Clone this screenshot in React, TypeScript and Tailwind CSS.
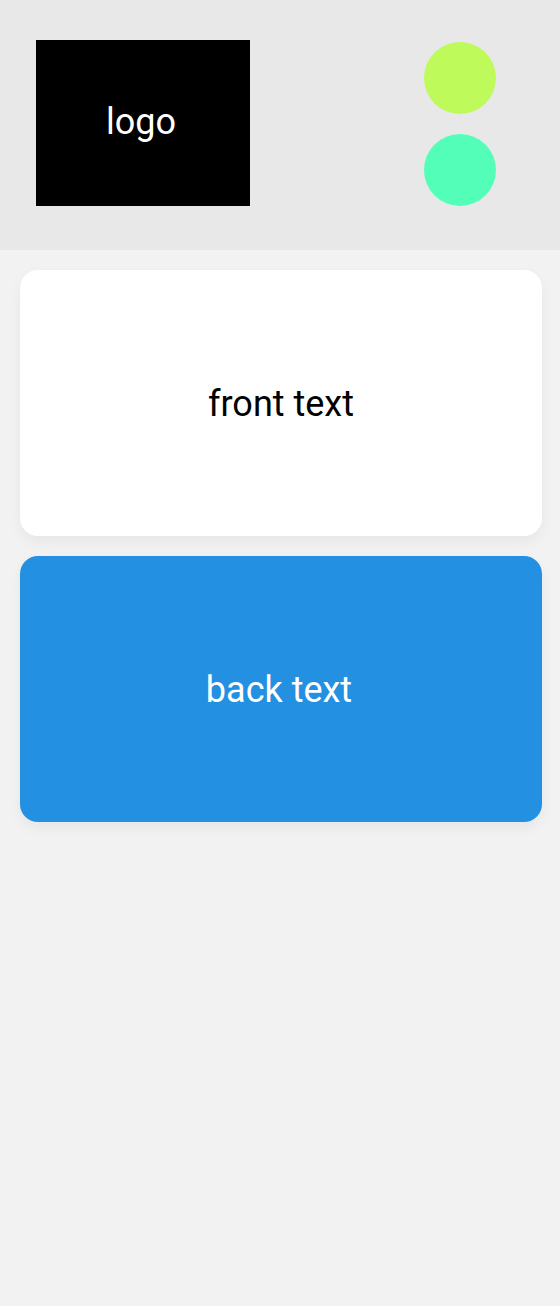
export default function App() {
  return (
    <div className="flex h-[1306px] w-[560px] flex-col bg-[#f2f2f2] font-['Roboto',sans-serif] text-[36px] leading-[42px]">
      <header className="flex h-[250px] items-start justify-between bg-[#e8e8e8] pt-10 pr-16 pl-9">
        <div className="flex h-[166px] w-[214px] items-center justify-center bg-black pr-1 pb-0.5 text-white">logo</div>
        <div className="flex flex-col gap-5 pt-0.5">
          <div className="size-[72px] rounded-full bg-[#befb5a]" />
          <div className="size-[72px] rounded-full bg-[#53ffb8]" />
        </div>
      </header>
      <main className="flex flex-col gap-5 pt-5 pr-[18px] pl-5">
        <section className="flex h-[266px] items-center justify-center rounded-[18px] bg-white pt-0.5 text-black shadow-[0_6px_14px_rgba(0,0,0,0.05)]">front text</section>
        <section className="flex h-[266px] items-center justify-center rounded-[18px] bg-[#2490e2] pt-0.5 pr-1 text-white shadow-[0_6px_14px_rgba(0,0,0,0.05)]">back text</section>
      </main>
    </div>
  );
}
